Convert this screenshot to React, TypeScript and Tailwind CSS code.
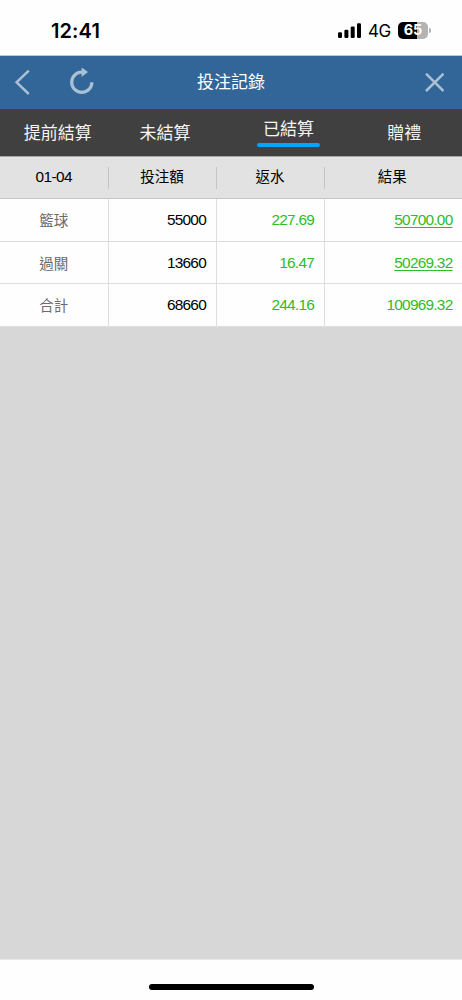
const tabs = ['提前結算', '未結算', '已結算', '贈禮'];
const heads = ['01-04', '投注額', '返水', '結果'];
const rows = [
  { name: '籃球', bet: '55000', rebate: '227.69', result: '50700.00', link: true },
  { name: '過關', bet: '13660', rebate: '16.47', result: '50269.32', link: true },
  { name: '合計', bet: '68660', rebate: '244.16', result: '100969.32', link: false },
];

function StatusBar() {
  return (
    <div className="flex h-[56px] items-start border-b border-[#b5c8da] bg-[#fefefe] pt-[20px] pl-[51px] text-black">
      <span className="w-[286px] font-['Inter'] text-[20px] leading-[22px] font-semibold tracking-[0.1px]">12:41</span>
      <svg className="mt-[3px] h-[16px] w-[25px]" viewBox="0 0 25 16">
        <rect x="1" y="9.3" width="4" height="5.7" rx="1.2" />
        <rect x="7.4" y="6.8" width="4" height="8.2" rx="1.2" />
        <rect x="13.7" y="3.6" width="4" height="11.4" rx="1.2" />
        <rect x="20" y="0.3" width="4" height="14.7" rx="1.2" />
      </svg>
      <span className="ml-[6px] w-[30px] font-['Inter'] text-[17px] leading-[23px] tracking-[-0.5px]">4G</span>
      <div className="mt-[2px] flex h-[17px] w-[30px] items-center justify-center rounded-[5px] bg-[linear-gradient(to_right,#000_65%,#b3b3b3_65%)] font-['Inter'] text-[14.5px] leading-none font-bold text-white">
        65
      </div>
      <div className="mt-[8px] ml-[1px] h-[5px] w-[2px] rounded-r-full bg-[#b3b3b3]" />
    </div>
  );
}

function NavBar() {
  return (
    <header className="flex h-[53px] items-center bg-[#326699] text-[#a9c0d6]">
      <svg className="mb-[1px] ml-[14px] h-[28px] w-[18px]" viewBox="0 0 18 28" fill="none" stroke="currentColor" strokeWidth="2.5">
        <path d="M14.8 2.6 L2.6 14.3 L14.8 26" />
      </svg>
      <svg className="mb-[2px] ml-[36px] h-[28px] w-[28px]" viewBox="0 0 28 28" fill="none">
        <path d="M16 4.1 H13.8 A10.1 10.1 0 1 0 23.9 14.2" stroke="currentColor" strokeWidth="3.2" />
        <path d="M13.6 -0.6 L20 4.1 L13.6 9 Z" fill="currentColor" />
      </svg>
      <h1 className="ml-[101px] w-[227px] text-[17px] text-white">投注記錄</h1>
      <svg className="h-[20px] w-[20px]" viewBox="0 0 20 20" stroke="currentColor" strokeWidth="2.5">
        <path d="M2 0.7 L19.5 18 M19.5 0.7 L2 18" />
      </svg>
    </header>
  );
}

export default function App() {
  return (
    <div className="flex h-[1000px] w-[462px] flex-col overflow-hidden bg-[#fefefe] font-['Liberation_Sans','Noto_Sans_CJK_TC',sans-serif]">
      <StatusBar />
      <NavBar />
      <nav className="grid h-[47px] grid-cols-[115.5px_99px_148px_1fr] bg-[#404040] text-[17px] leading-[24px] text-[#f5f5f5]">
        {tabs.map((tab, i) =>
          i === 2 ? (
            <div key={tab} className="flex flex-col items-center pt-[9px]">
              <span>{tab}</span>
              <span className="mt-[1px] h-[4px] w-[63px] rounded-full bg-[#00a5ff]" />
            </div>
          ) : (
            <div key={tab} className={`pt-[13px] text-center ${i === 3 ? 'pr-[16px]' : ''}`}>{tab}</div>
          ),
        )}
      </nav>
      <div className="grid h-[43px] grid-cols-[108.5px_108px_108px_1fr] items-center border-t border-b border-t-[#a6a6a6] border-b-[#c4c4c4] bg-[#e2e2e2] text-[14.5px] text-black">
        {heads.map((head, i) => (
          <div
            key={head}
            className={`flex h-[22px] items-center justify-center ${i < 3 ? 'border-r border-[#c4c4c4]' : 'pr-[2px]'} ${i === 0 ? 'text-[15.4px] leading-[20px] tracking-[-0.6px]' : ''}`}
          >
            {i === 0 ? <span className="pb-[2px]">{head}</span> : head}
          </div>
        ))}
      </div>
      <main className="flex-1 bg-[#d7d7d7]">
        {rows.map((row) => (
          <div
            key={row.name}
            className="grid h-[42.5px] grid-cols-[108.5px_108px_108px_1fr] border-b border-[#dedede] bg-[#fefefe] text-right text-[15.4px] leading-[42px] tracking-[-0.75px] text-[#30bb28]"
          >
            <div className="border-r border-[#dedede] text-center text-[14.5px] leading-[44px] tracking-normal text-[#6b6b6b]">{row.name}</div>
            <div className="border-r border-[#dedede] pr-[9.5px] text-black">{row.bet}</div>
            <div className="border-r border-[#dedede] pr-[9.5px]">{row.rebate}</div>
            <div className="pr-[9.5px]">
              <span className={row.link ? 'underline decoration-1 underline-offset-2' : ''}>{row.result}</span>
            </div>
          </div>
        ))}
      </main>
      <footer className="flex h-[41px] justify-center border-t border-[#e8e8e8] pt-[24px]">
        <div className="h-[6px] w-[165px] rounded-full bg-black" />
      </footer>
    </div>
  );
}
